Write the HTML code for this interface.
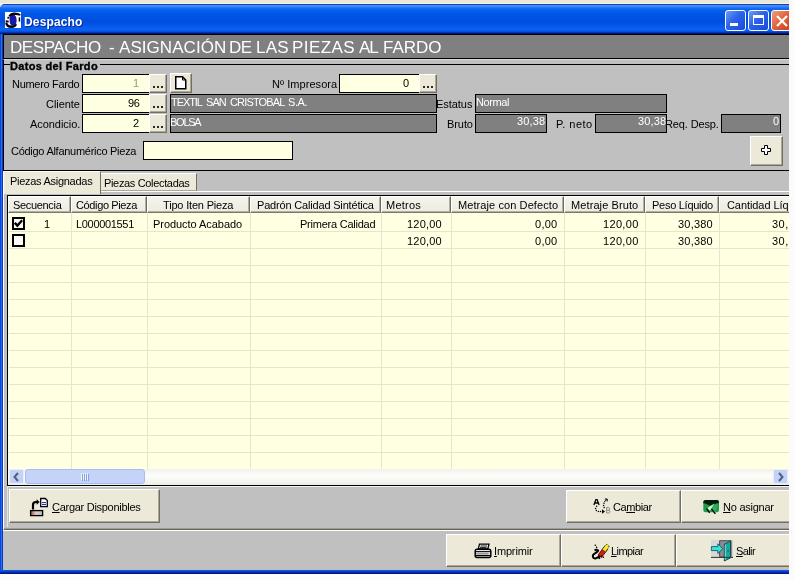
<!DOCTYPE html>
<html><head><meta charset="utf-8">
<style>
*{box-sizing:border-box;margin:0;padding:0}
html,body{width:795px;height:580px;overflow:hidden;background:#fbfbfb;font-family:"Liberation Sans",sans-serif;position:relative}
.a{position:absolute}
.t{position:absolute;will-change:transform;font-size:11px;line-height:13px;white-space:nowrap;color:#000}
.inp{position:absolute;background:#ffffe1;border:1px solid #000}
.dk{position:absolute;background:#808080;border:1px solid #000}
.btn{position:absolute;background:#ece9d8;border-top:1px solid #fff;border-left:1px solid #fff;border-right:1px solid #716f64;border-bottom:1px solid #716f64;box-shadow:inset -1px -1px 0 #aca899}
.wb{position:absolute;top:10px;width:21px;height:21px;border:1px solid #fff;border-radius:3px;background:linear-gradient(135deg,#6c9cf8,#2c62ea 45%,#1a4ad8)}
.dots{position:absolute;width:2px;height:2px;background:#282828;box-shadow:4px 0 0 #282828,8px 0 0 #282828}
</style></head>
<body>
<div class="a" style="left:0;top:0;width:789px;height:4px;background:#e8e6d6;border-bottom:1px solid #f4f4f0"></div>
<div class="a" style="left:0;top:4px;width:789px;height:570px;background:#0a52e4;border-radius:5px 0 0 0"></div>
<div class="a" style="left:0;top:4px;width:789px;height:30px;border-radius:5px 0 0 0;background:linear-gradient(#1a3cb0 0,#1a3cb0 1px,#4c98fa 1px,#2c7ef6 3px,#0c64f2 5px,#0056e8 10px,#004ede 18px,#0a5cf0 24px,#0a62f4 26px,#004cd8 28px,#002288 29px,#001060 30px)"></div>
<div class="a" style="left:5px;top:12px;width:16px;height:16px;background:#fff"></div>
<svg class="a" style="left:5px;top:12px" width="16" height="16" viewBox="0 0 16 16">
<path d="M4.6 4.2 Q5.2 2.6 8 2.6 Q11.6 3.2 11.6 8.2 Q11.6 13.8 8 13.8 Q4.6 13.6 4.6 8.2 Z" fill="#1616a8"/>
<path d="M3.4 3.8 Q5.6 0.2 9.6 0.4 Q13.4 0.6 15.6 2.2 L15.2 3.8 Q12.4 2.8 9.4 3 Q6.4 3 5 4.6 Z" fill="#000"/>
<path d="M0.2 10.8 Q0.6 16 6.5 16 Q11 15.8 12 12.4 L10.6 12 Q9.6 13.6 6.6 13.6 Q2.8 13.4 2.2 10.6 Z" fill="#000"/>
<rect x="2.4" y="4.8" width="1.8" height="1.8" fill="#000"/>
<path d="M0.6 8.2 L3.8 8.8 L3.6 10.6 L0.8 10.2 Z" fill="#000"/>
<rect x="13.7" y="5.4" width="1.5" height="4.2" fill="#000"/>
</svg>
<div class="wb" style="left:725px"><div class="a" style="left:4px;top:12px;width:8px;height:3px;background:#fff"></div></div>
<div class="wb" style="left:748px"><div class="a" style="left:4px;top:4px;width:11px;height:10px;border:1px solid #fff;border-top:3px solid #fff"></div></div>
<div class="wb" style="left:771px;background:linear-gradient(135deg,#f0a080,#e06038 50%,#c84020)"><svg class="a" style="left:3px;top:3px" width="14" height="14"><path d="M2 2 L12 12 M12 2 L2 12" stroke="#fff" stroke-width="2.2"/></svg></div>
<div class="a" style="left:3px;top:34px;width:786px;height:536px;background:#c0c0c0"></div>
<div class="a" style="left:0;top:34px;width:3px;height:536px;background:linear-gradient(90deg,#0a46d8 0,#0a46d8 1px,#2a6cf2 1px,#2a6cf2 2px,#0838c0 2px)"></div>
<div class="a" style="left:3px;top:34px;width:786px;height:25px;background:#808080;border-top:1px solid #000;border-bottom:1px solid #000;border-left:1px solid #000"></div>
<div class="a" style="left:3px;top:59px;width:786px;height:5px;border-left:1px solid #000;border-top:1px solid #d6d8de"></div>
<div class="a" style="left:3px;top:64px;width:790px;height:107px;border-top:1px solid #000;border-left:1px solid #000;border-bottom:1px solid #000"></div>
<div class="a" style="left:10px;top:60px;width:90px;height:10px;background:#c0c0c0"></div>
<div class="inp" style="left:82px;top:74px;width:68px;height:19px;border-right:0"></div>
<div class="btn" style="left:149px;top:74px;width:18px;height:19px"></div><div class="dots" style="left:153px;top:86px"></div>
<div class="btn" style="left:170px;top:73px;width:22px;height:20px"></div>
<svg class="a" style="left:175px;top:76px" width="12" height="14"><path d="M0.75 0.75 H7.5 L10.75 4 V12.75 H0.75 Z" fill="#fff" stroke="#000" stroke-width="1.5"/><path d="M7.5 0.75 V4 H10.75" fill="none" stroke="#000" stroke-width="1"/></svg>
<div class="inp" style="left:339px;top:74px;width:80px;height:19px;border-right:0"></div>
<div class="btn" style="left:419px;top:74px;width:18px;height:19px"></div><div class="dots" style="left:423px;top:86px"></div>
<div class="inp" style="left:82px;top:94px;width:68px;height:19px;border-right:0"></div>
<div class="btn" style="left:149px;top:94px;width:18px;height:19px"></div><div class="dots" style="left:153px;top:106px"></div>
<div class="dk" style="left:170px;top:94px;width:267px;height:19px"></div>
<div class="dk" style="left:475px;top:94px;width:192px;height:19px"></div>
<div class="inp" style="left:82px;top:114px;width:68px;height:19px;border-right:0"></div>
<div class="btn" style="left:149px;top:114px;width:18px;height:19px"></div><div class="dots" style="left:153px;top:126px"></div>
<div class="dk" style="left:170px;top:114px;width:267px;height:19px"></div>
<div class="dk" style="left:475px;top:114px;width:72px;height:19px"></div>
<div class="dk" style="left:595px;top:114px;width:72px;height:19px"></div>
<div class="dk" style="left:721px;top:114px;width:60px;height:19px"></div>
<div class="inp" style="left:143px;top:141px;width:150px;height:19px"></div>
<div class="btn" style="left:750px;top:136px;width:33px;height:30px"></div>
<svg class="a" style="left:761px;top:145px" width="11" height="11"><path d="M3.5 0.5 H6.5 V3.5 H9.5 V6.5 H6.5 V9.5 H3.5 V6.5 H0.5 V3.5 H3.5 Z" fill="#fff" stroke="#000" stroke-width="1"/></svg>
<div class="a" style="left:3px;top:191px;width:786px;height:1px;background:#fff"></div>
<div class="a" style="left:3px;top:171px;width:1px;height:358px;background:#fff"></div>
<div class="a" style="left:4px;top:171px;width:97px;height:23px;background:#ece9d8;border-top:1px solid #fff;border-right:1px solid #716f64"></div>
<div class="a" style="left:101px;top:173px;width:96px;height:18px;background:#ece9d8;border-top:1px solid #fff;border-right:1px solid #716f64;border-bottom:1px solid #aca899"></div>
<div class="a" style="left:7px;top:195px;width:800px;height:291px;background:#ffffe1;border:1px solid #000"></div>
<div class="a" style="left:8px;top:196px;width:800px;height:17px;background:linear-gradient(#f6f5ee,#ecebe0)"></div>
<div class="a" style="left:8px;top:196px;width:63px;height:17px;border-top:1px solid #fff;border-left:1px solid #fff;border-right:1px solid #6e6c60;border-bottom:1px solid #7a786c;box-shadow:inset -1px -1px 0 #b4b0a0"></div>
<div class="a" style="left:71px;top:196px;width:76px;height:17px;border-top:1px solid #fff;border-left:1px solid #fff;border-right:1px solid #6e6c60;border-bottom:1px solid #7a786c;box-shadow:inset -1px -1px 0 #b4b0a0"></div>
<div class="a" style="left:147px;top:196px;width:103px;height:17px;border-top:1px solid #fff;border-left:1px solid #fff;border-right:1px solid #6e6c60;border-bottom:1px solid #7a786c;box-shadow:inset -1px -1px 0 #b4b0a0"></div>
<div class="a" style="left:250px;top:196px;width:131px;height:17px;border-top:1px solid #fff;border-left:1px solid #fff;border-right:1px solid #6e6c60;border-bottom:1px solid #7a786c;box-shadow:inset -1px -1px 0 #b4b0a0"></div>
<div class="a" style="left:381px;top:196px;width:70px;height:17px;border-top:1px solid #fff;border-left:1px solid #fff;border-right:1px solid #6e6c60;border-bottom:1px solid #7a786c;box-shadow:inset -1px -1px 0 #b4b0a0"></div>
<div class="a" style="left:451px;top:196px;width:113px;height:17px;border-top:1px solid #fff;border-left:1px solid #fff;border-right:1px solid #6e6c60;border-bottom:1px solid #7a786c;box-shadow:inset -1px -1px 0 #b4b0a0"></div>
<div class="a" style="left:564px;top:196px;width:81px;height:17px;border-top:1px solid #fff;border-left:1px solid #fff;border-right:1px solid #6e6c60;border-bottom:1px solid #7a786c;box-shadow:inset -1px -1px 0 #b4b0a0"></div>
<div class="a" style="left:645px;top:196px;width:74px;height:17px;border-top:1px solid #fff;border-left:1px solid #fff;border-right:1px solid #6e6c60;border-bottom:1px solid #7a786c;box-shadow:inset -1px -1px 0 #b4b0a0"></div>
<div class="a" style="left:719px;top:196px;width:111px;height:17px;border-top:1px solid #fff;border-left:1px solid #fff;border-right:1px solid #6e6c60;border-bottom:1px solid #7a786c;box-shadow:inset -1px -1px 0 #b4b0a0"></div>
<div class="a" style="left:8px;top:231px;width:790px;height:1px;background:#e6e4cc"></div>
<div class="a" style="left:8px;top:248px;width:790px;height:1px;background:#e6e4cc"></div>
<div class="a" style="left:8px;top:265px;width:790px;height:1px;background:#e6e4cc"></div>
<div class="a" style="left:8px;top:282px;width:790px;height:1px;background:#e6e4cc"></div>
<div class="a" style="left:8px;top:299px;width:790px;height:1px;background:#e6e4cc"></div>
<div class="a" style="left:8px;top:316px;width:790px;height:1px;background:#e6e4cc"></div>
<div class="a" style="left:8px;top:333px;width:790px;height:1px;background:#e6e4cc"></div>
<div class="a" style="left:8px;top:350px;width:790px;height:1px;background:#e6e4cc"></div>
<div class="a" style="left:8px;top:367px;width:790px;height:1px;background:#e6e4cc"></div>
<div class="a" style="left:8px;top:384px;width:790px;height:1px;background:#e6e4cc"></div>
<div class="a" style="left:8px;top:401px;width:790px;height:1px;background:#e6e4cc"></div>
<div class="a" style="left:8px;top:418px;width:790px;height:1px;background:#e6e4cc"></div>
<div class="a" style="left:8px;top:435px;width:790px;height:1px;background:#e6e4cc"></div>
<div class="a" style="left:8px;top:452px;width:790px;height:1px;background:#e6e4cc"></div>
<div class="a" style="left:71px;top:213px;width:1px;height:256px;background:#e6e4cc"></div>
<div class="a" style="left:147px;top:213px;width:1px;height:256px;background:#e6e4cc"></div>
<div class="a" style="left:250px;top:213px;width:1px;height:256px;background:#e6e4cc"></div>
<div class="a" style="left:381px;top:213px;width:1px;height:256px;background:#e6e4cc"></div>
<div class="a" style="left:451px;top:213px;width:1px;height:256px;background:#e6e4cc"></div>
<div class="a" style="left:564px;top:213px;width:1px;height:256px;background:#e6e4cc"></div>
<div class="a" style="left:645px;top:213px;width:1px;height:256px;background:#e6e4cc"></div>
<div class="a" style="left:719px;top:213px;width:1px;height:256px;background:#e6e4cc"></div>
<div class="a" style="left:8px;top:213px;width:1px;height:256px;background:#fdfdf6"></div>
<div class="a" style="left:12px;top:217px;width:13px;height:13px;border:2px solid #000;background:#fbfbf4"></div>
<svg class="a" style="left:14px;top:219px" width="9" height="9"><path d="M0.8 3.8 L3.4 6.6 L8.2 1.2" stroke="#000" stroke-width="2.4" fill="none"/></svg>
<div class="a" style="left:12px;top:234px;width:13px;height:13px;border:2px solid #000;background:#fbfbf4"></div>
<div class="a" style="left:8px;top:469px;width:790px;height:16px;background:linear-gradient(#f2f2ec,#fdfdfb 45%,#f4f4ee 80%,#ecece4)"></div>
<div class="a" style="left:9px;top:469px;width:15px;height:15px;background:#c4d2f6;border:1px solid #e8eefc;border-radius:2px"></div>
<svg class="a" style="left:12px;top:472px" width="9" height="10"><path d="M6 1 L2.5 5 L6 9" stroke="#4d6185" stroke-width="2" fill="none"/></svg>
<div class="a" style="left:25px;top:469px;width:120px;height:15px;background:#c4d4f8;border:1px solid #a8bcef;border-radius:3px"></div>
<div class="a" style="left:81px;top:473px;width:1px;height:7px;background:#eef2fd;box-shadow:1px 1px 0 #8aa2e0"></div>
<div class="a" style="left:83px;top:473px;width:1px;height:7px;background:#eef2fd;box-shadow:1px 1px 0 #8aa2e0"></div>
<div class="a" style="left:85px;top:473px;width:1px;height:7px;background:#eef2fd;box-shadow:1px 1px 0 #8aa2e0"></div>
<div class="a" style="left:87px;top:473px;width:1px;height:7px;background:#eef2fd;box-shadow:1px 1px 0 #8aa2e0"></div>
<div class="a" style="left:773px;top:469px;width:15px;height:15px;background:#c4d2f6;border:1px solid #e8eefc;border-radius:2px"></div>
<svg class="a" style="left:776px;top:472px" width="9" height="10"><path d="M3 1 L6.5 5 L3 9" stroke="#4d6185" stroke-width="2" fill="none"/></svg>
<div class="a" style="left:7px;top:486px;width:782px;height:1px;background:#f4f4f4"></div>
<div class="a" style="left:7px;top:486px;width:1px;height:41px;background:#e4e4e4"></div>
<div class="a" style="left:4px;top:528px;width:785px;height:1px;background:#a09e94"></div>
<div class="a" style="left:4px;top:529px;width:785px;height:1px;background:#66635a"></div>
<div class="a" style="left:3px;top:530px;width:786px;height:1px;background:#fff"></div>
<div class="btn" style="left:9px;top:489px;width:151px;height:34px"></div>
<div class="btn" style="left:566px;top:490px;width:115px;height:33px"></div>
<div class="btn" style="left:681px;top:490px;width:119px;height:33px"></div>
<div class="btn" style="left:446px;top:534px;width:115px;height:33px"></div>
<div class="btn" style="left:561px;top:534px;width:115px;height:33px"></div>
<div class="btn" style="left:676px;top:534px;width:124px;height:33px"></div>
<svg class="a" style="left:29px;top:497px" width="20" height="20" viewBox="0 0 20 20">
<defs><linearGradient id="tg" x1="0" x2="1"><stop offset="0" stop-color="#b04848"/><stop offset="0.45" stop-color="#e0d0d0"/><stop offset="1" stop-color="#a8c0c0"/></linearGradient></defs>
<path d="M11.7 1.5 H16.3 L18.3 3.5 V9.6 H11.7 Z" fill="#fff" stroke="#000" stroke-width="1.3"/>
<path d="M13 5.6 H17 M13 7.6 H17" stroke="#1a1aa0" stroke-width="1"/>
<path d="M4 12.5 V7.8 Q4 5 7 5 H8" stroke="#000" stroke-width="2.2" fill="none"/>
<path d="M7.6 2.2 L10.6 5 L7.6 7.8 Z" fill="#000"/>
<rect x="1.6" y="13.6" width="12" height="5" fill="url(#tg)" stroke="#000" stroke-width="1.3"/>
</svg>
<svg class="a" style="left:592px;top:497px" width="20" height="18" viewBox="0 0 20 18">
<path d="M1.9 7.9 L3.9 2.6 H5.1 L7.1 7.9 M3.1 6 H5.9" stroke="#000" stroke-width="1.3" fill="none"/>
<path d="M14.6 10.5 V16 H16.6 Q17.9 16 17.9 14.6 Q17.9 13.2 16.4 13.2 H14.6 M16.4 13.2 Q17.6 13.2 17.6 11.9 Q17.6 10.5 16.3 10.5 H14.6" stroke="#8a8a8a" stroke-width="1" fill="none"/>
<g fill="#000"><circle cx="4.6" cy="9.3" r="0.75"/><circle cx="3.6" cy="11.5" r="0.75"/><circle cx="4.3" cy="13.5" r="0.75"/><circle cx="6.4" cy="14.5" r="0.75"/><circle cx="8.5" cy="14.5" r="0.75"/>
<circle cx="12.2" cy="10.6" r="0.75"/><circle cx="11.6" cy="8.6" r="0.75"/><circle cx="12" cy="6.3" r="0.75"/></g>
<path d="M10 12.3 L13 14.5 L10 16.7 Z" fill="#000"/>
<path d="M12.2 5 L15 2.2 M12.8 2 H15.2 V4.4" stroke="#000" stroke-width="1" fill="none"/>
</svg>
<svg class="a" style="left:702px;top:499px" width="18" height="16" viewBox="0 0 18 16">
<rect x="1.3" y="1" width="15.7" height="12.3" rx="2.5" fill="#1f9a4a"/>
<path d="M3.5 1 H14.8 Q17 1 17 3.2 V4 L12.8 4.9 L8.3 6.7 L3.2 4.6 L1.3 4.2 V3.2 Q1.3 1 3.5 1 Z" fill="#021c0a"/>
<path d="M4.9 9.2 L12.5 4.6 L8 11.8 Z" fill="#c8f4d4"/>
<path d="M9.4 9.4 L15.4 3.9 L13.5 14.2 Z" fill="#32b060"/>
<path d="M4.6 9.4 L7.6 13.8 M9.5 9.8 L13.3 14.8" stroke="#000" stroke-width="1.3"/>
</svg>
<svg class="a" style="left:474px;top:543px" width="18" height="16" viewBox="0 0 18 16">
<path d="M5.5 1.2 H15 L13.8 5.8 H4.3 Z" fill="#fff" stroke="#000" stroke-width="1.3"/>
<path d="M6.5 3 H13 M6 4.6 H12.5" stroke="#000" stroke-width="0.9"/>
<path d="M2.8 6.2 H15.2 Q16.8 6.2 16.8 8 V12.6 Q16.8 14.6 15 14.6 H3 Q1.2 14.6 1.2 12.6 V8 Q1.2 6.2 2.8 6.2 Z" fill="#e8e8e8" stroke="#000" stroke-width="1.5"/>
<path d="M1.5 8.6 H16.5" stroke="#000" stroke-width="1"/>
<rect x="2.2" y="9.6" width="12.5" height="2" fill="#9c9c9c"/>
<path d="M1.5 12.6 H16.5" stroke="#000" stroke-width="1.2"/>
</svg>
<svg class="a" style="left:591px;top:542px" width="20" height="18" viewBox="0 0 20 18">
<path d="M7.2 12.8 L13.2 4.8 L16.6 7.4 L10.6 15.4 Z" fill="#e01818" stroke="#000" stroke-width="0.7"/>
<path d="M11.2 7.5 L14.4 3.2 Q15.4 1.8 16.8 2.8 L17.4 3.3 Q18.4 4.4 17.6 5.6 L14.6 10 Z" fill="#f4e82a" stroke="#000" stroke-width="0.8" stroke-dasharray="1 0.6"/>
<path d="M3.5 8.2 Q6.5 7 7.5 9 M7.4 8.8 Q5 11 3.2 11.8 Q1.6 12.8 1.8 14.6 Q2.2 16.6 4.5 16.4 Q7 16 8.6 13.6 M6.8 14.4 L9 16.6" stroke="#000" stroke-width="2" fill="none"/>
<g fill="#000"><circle cx="4.3" cy="3.3" r="0.8"/><circle cx="5.6" cy="5.4" r="0.8"/><circle cx="10.5" cy="14.2" r="0.8"/><circle cx="12.4" cy="15.2" r="0.8"/></g>
</svg>
<svg class="a" style="left:710px;top:539px" width="24" height="24" viewBox="0 0 24 24">
<rect x="1.1" y="1.2" width="21.5" height="17.6" fill="#c4c4c8"/>
<rect x="1.1" y="1.2" width="8" height="17.6" fill="#d8d8dc"/>
<path d="M9.6 1.7 H21 V17.8 H9.6 Z" fill="#8c8a94" stroke="#505050" stroke-width="1"/>
<path d="M14.3 5.3 L20.5 2 V18.9 L14.3 22 Z" fill="#18a8a0" stroke="#0a4846" stroke-width="0.9"/>
<path d="M14.8 6 L16 5.4 V20.4 L14.8 21 Z" fill="#60d8d0"/>
<rect x="17.6" y="11.2" width="1" height="1.2" fill="#083838"/>
<path d="M1.4 7.6 H7.8 V4.8 L12.8 9.7 L7.8 14.6 V11.6 H1.4 Z" fill="#34e4dc" stroke="#0a4a48" stroke-width="0.8"/>
<path d="M1 18.4 H23" stroke="#303030" stroke-width="1"/>
</svg>
<div class="t" style="left:24.00px;top:14px;font-size:12px;line-height:16px;letter-spacing:0.143px;font-weight:bold;color:#fff;text-shadow:1px 1px 0 #0a2a9a;">Despacho</div>
<div class="t" style="left:10.20px;top:38px;font-size:17px;line-height:19px;letter-spacing:-0.429px;color:#fff;">DESPACHO</div>
<div class="t" style="left:108.80px;top:38px;font-size:17px;line-height:19px;letter-spacing:-1.400px;color:#fff;">-</div>
<div class="t" style="left:119.00px;top:38px;font-size:17px;line-height:19px;letter-spacing:0.056px;color:#fff;">ASIGNACIÓN</div>
<div class="t" style="left:229.20px;top:38px;font-size:17px;line-height:19px;letter-spacing:-0.500px;color:#fff;">DE</div>
<div class="t" style="left:255.60px;top:38px;font-size:17px;line-height:19px;letter-spacing:0.250px;color:#fff;">LAS</div>
<div class="t" style="left:291.80px;top:38px;font-size:17px;line-height:19px;letter-spacing:0.440px;color:#fff;">PIEZAS</div>
<div class="t" style="left:358.80px;top:38px;font-size:17px;line-height:19px;letter-spacing:-1.100px;color:#fff;">AL</div>
<div class="t" style="left:383.00px;top:38px;font-size:17px;line-height:19px;letter-spacing:0.000px;color:#fff;">FARDO</div>
<div class="t" style="left:10.20px;top:60px;font-size:11px;line-height:13px;letter-spacing:0.321px;font-weight:bold;-webkit-text-stroke:0.35px #000;">Datos del Fardo</div>
<div class="t" style="left:11.60px;top:78px;font-size:11px;line-height:13px;letter-spacing:-0.300px;">Numero Fardo</div>
<div class="t" style="left:133.20px;top:77px;font-size:11px;line-height:13px;letter-spacing:-3.000px;color:#9a9a80;">1</div>
<div class="t" style="left:272.40px;top:78px;font-size:11px;line-height:13px;letter-spacing:0.055px;">Nº Impresora</div>
<div class="t" style="left:403.20px;top:77px;font-size:11px;line-height:13px;letter-spacing:1.400px;">0</div>
<div class="t" style="left:45.60px;top:98px;font-size:11px;line-height:13px;letter-spacing:-0.050px;">Cliente</div>
<div class="t" style="left:128.00px;top:97px;font-size:11px;line-height:13px;letter-spacing:-0.400px;">96</div>
<div class="t" style="left:171.00px;top:96px;font-size:11px;line-height:13px;letter-spacing:-1.080px;color:#fff;">TEXTIL</div>
<div class="t" style="left:205.80px;top:96px;font-size:11px;line-height:13px;letter-spacing:-0.950px;color:#fff;">SAN</div>
<div class="t" style="left:229.60px;top:96px;font-size:11px;line-height:13px;letter-spacing:-0.850px;color:#fff;">CRISTOBAL</div>
<div class="t" style="left:288.20px;top:96px;font-size:11px;line-height:13px;letter-spacing:-0.400px;color:#fff;">S.A.</div>
<div class="t" style="left:436.00px;top:98px;font-size:11px;line-height:13px;letter-spacing:-0.050px;">Estatus</div>
<div class="t" style="left:475.60px;top:96px;font-size:11px;line-height:13px;letter-spacing:-0.380px;color:#fff;">Normal</div>
<div class="t" style="left:30.20px;top:118px;font-size:11px;line-height:13px;letter-spacing:-0.056px;">Acondicio.</div>
<div class="t" style="left:133.20px;top:117px;font-size:11px;line-height:13px;letter-spacing:1.200px;">2</div>
<div class="t" style="left:170.00px;top:116px;font-size:11px;line-height:13px;letter-spacing:-1.250px;color:#fff;">BOLSA</div>
<div class="t" style="left:446.60px;top:118px;font-size:11px;line-height:13px;letter-spacing:-0.075px;">Bruto</div>
<div class="t" style="left:517.00px;top:115px;font-size:11px;line-height:13px;letter-spacing:0.125px;color:#fff;">30,38</div>
<div class="t" style="left:556.40px;top:118px;font-size:11px;line-height:13px;letter-spacing:0.433px;">P. neto</div>
<div class="t" style="left:638.00px;top:115px;font-size:11px;line-height:13px;letter-spacing:0.125px;color:#fff;">30,38</div>
<div class="t" style="left:665.40px;top:118px;font-size:11px;line-height:13px;letter-spacing:-0.133px;">Req. Desp.</div>
<div class="t" style="left:773.00px;top:115px;font-size:11px;line-height:13px;letter-spacing:2.000px;color:#fff;">0</div>
<div class="t" style="left:11.00px;top:145px;font-size:11px;line-height:13px;letter-spacing:-0.275px;">Código Alfanumérico Pieza</div>
<div class="t" style="left:9.60px;top:175px;font-size:11px;line-height:13px;letter-spacing:-0.280px;">Piezas Asignadas</div>
<div class="t" style="left:104.20px;top:177px;font-size:11px;line-height:13px;letter-spacing:-0.337px;">Piezas Colectadas</div>
<div class="t" style="left:13.20px;top:199px;font-size:11px;line-height:13px;letter-spacing:-0.325px;">Secuencia</div>
<div class="t" style="left:75.80px;top:199px;font-size:11px;line-height:13px;letter-spacing:-0.373px;">Código Pieza</div>
<div class="t" style="left:163.20px;top:199px;font-size:11px;line-height:13px;letter-spacing:-0.179px;">Tipo Iten Pieza</div>
<div class="t" style="left:257.00px;top:199px;font-size:11px;line-height:13px;letter-spacing:-0.178px;">Padrón Calidad Sintética</div>
<div class="t" style="left:385.60px;top:199px;font-size:11px;line-height:13px;letter-spacing:0.240px;">Metros</div>
<div class="t" style="left:458.20px;top:199px;font-size:11px;line-height:13px;letter-spacing:0.089px;">Metraje con Defecto</div>
<div class="t" style="left:571.00px;top:199px;font-size:11px;line-height:13px;letter-spacing:0.100px;">Metraje Bruto</div>
<div class="t" style="left:652.00px;top:199px;font-size:11px;line-height:13px;letter-spacing:-0.273px;">Peso Líquido</div>
<div class="t" style="left:726.80px;top:199px;font-size:11px;line-height:13px;letter-spacing:-0.073px;">Cantidad Líquida</div>
<div class="t" style="left:44.20px;top:218px;font-size:11px;line-height:13px;letter-spacing:-3.500px;">1</div>
<div class="t" style="left:76.00px;top:218px;font-size:11px;line-height:13px;letter-spacing:-0.322px;">L000001551</div>
<div class="t" style="left:152.80px;top:218px;font-size:11px;line-height:13px;letter-spacing:-0.047px;">Producto Acabado</div>
<div class="t" style="left:299.60px;top:218px;font-size:11px;line-height:13px;letter-spacing:-0.236px;">Primera Calidad</div>
<div class="t" style="left:407.20px;top:218px;font-size:11px;line-height:13px;letter-spacing:0.200px;">120,00</div>
<div class="t" style="left:535.40px;top:218px;font-size:11px;line-height:13px;letter-spacing:0.267px;">0,00</div>
<div class="t" style="left:603.20px;top:218px;font-size:11px;line-height:13px;letter-spacing:0.340px;">120,00</div>
<div class="t" style="left:678.00px;top:218px;font-size:11px;line-height:13px;letter-spacing:0.200px;">30,380</div>
<div class="t" style="left:772.00px;top:218px;font-size:11px;line-height:13px;letter-spacing:0.500px;">30,</div>
<div class="t" style="left:407.20px;top:235px;font-size:11px;line-height:13px;letter-spacing:0.200px;">120,00</div>
<div class="t" style="left:535.40px;top:235px;font-size:11px;line-height:13px;letter-spacing:0.267px;">0,00</div>
<div class="t" style="left:603.20px;top:235px;font-size:11px;line-height:13px;letter-spacing:0.340px;">120,00</div>
<div class="t" style="left:678.00px;top:235px;font-size:11px;line-height:13px;letter-spacing:0.200px;">30,380</div>
<div class="t" style="left:772.00px;top:235px;font-size:11px;line-height:13px;letter-spacing:0.500px;">30,</div>
<div class="t" style="left:52.40px;top:501px;font-size:11px;line-height:13px;letter-spacing:-0.282px;"><u>C</u>argar Disponibles</div>
<div class="t" style="left:612.60px;top:501px;font-size:11px;line-height:13px;letter-spacing:-0.417px;">Ca<u>m</u>biar</div>
<div class="t" style="left:722.60px;top:501px;font-size:11px;line-height:13px;letter-spacing:-0.244px;"><u>N</u>o asignar</div>
<div class="t" style="left:494.00px;top:545px;font-size:11px;line-height:13px;letter-spacing:-0.157px;"><u>I</u>mprimir</div>
<div class="t" style="left:611.20px;top:545px;font-size:11px;line-height:13px;letter-spacing:-0.567px;"><u>L</u>impiar</div>
<div class="t" style="left:736.20px;top:545px;font-size:11px;line-height:13px;letter-spacing:-0.600px;"><u>S</u>alir</div>
<div class="a" style="left:0;top:570px;width:789px;height:4px;background:linear-gradient(#1a5ae6 0,#0848d8 1px,#0838c0 2px,#001c98 3px,#000f70 4px)"></div>
<div class="a" style="left:789px;top:0;width:6px;height:580px;background:#fbfbfb"></div>
<div class="a" style="left:0;top:574px;width:795px;height:6px;background:#fbfbfb"></div>
</body></html>
